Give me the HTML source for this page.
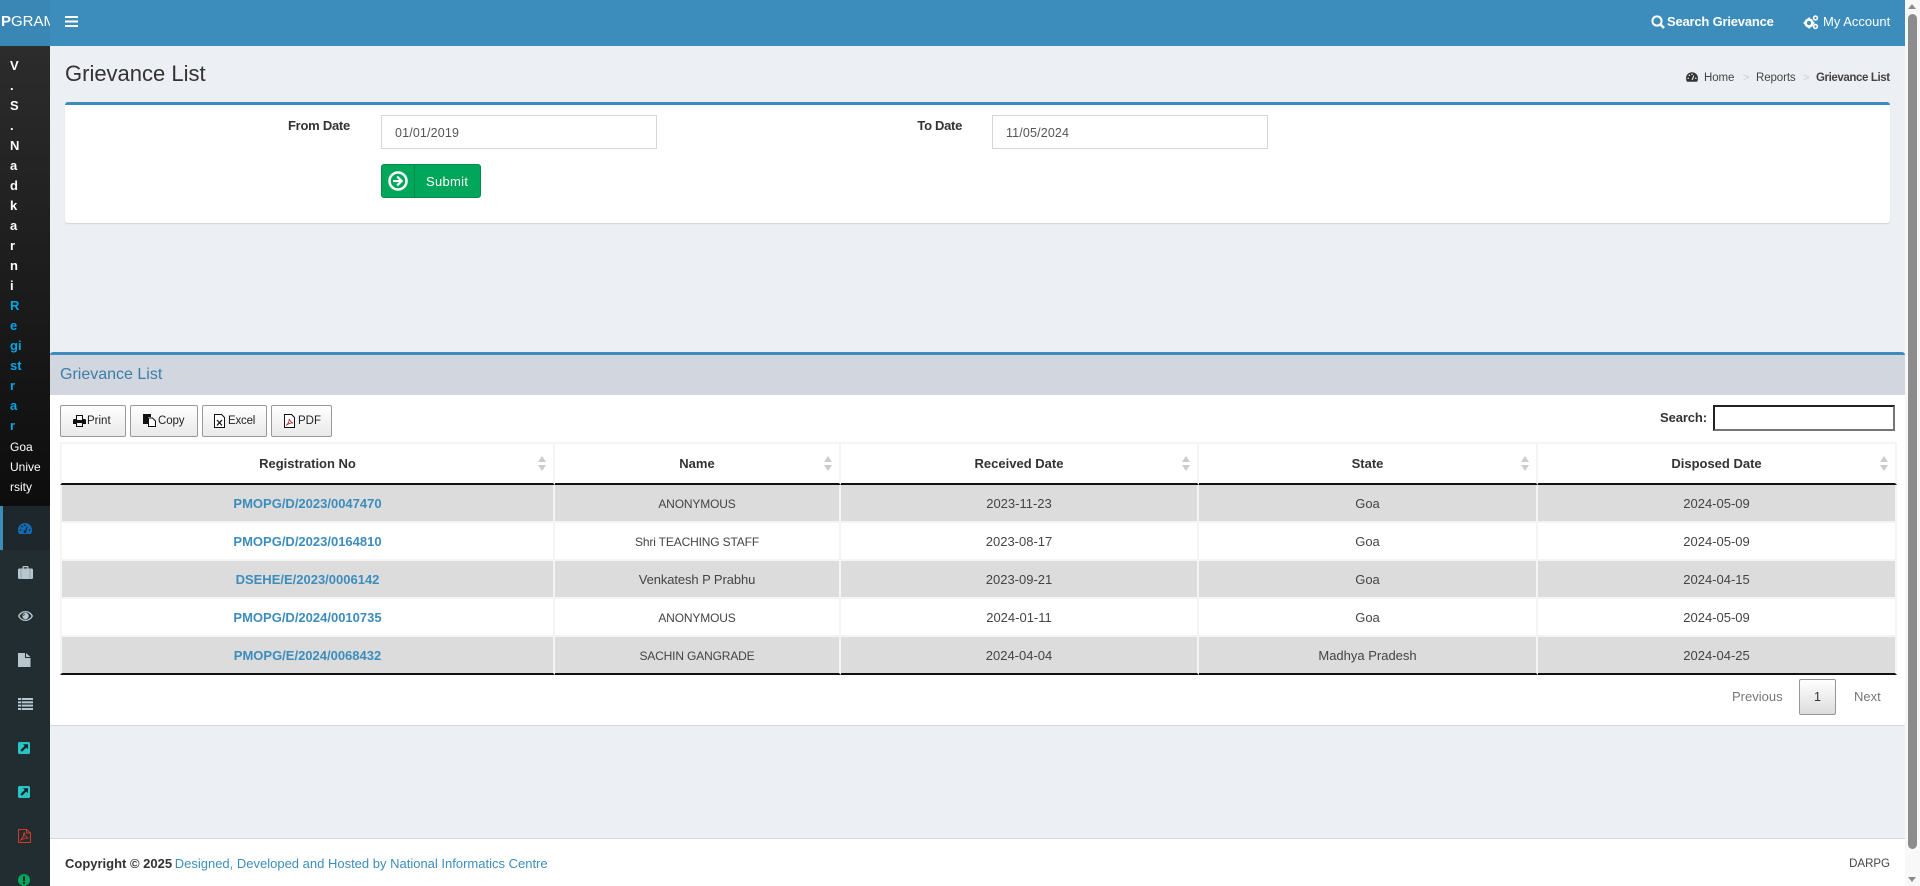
<!DOCTYPE html>
<html lang="en">
<head>
<meta charset="utf-8">
<title>Grievance List</title>
<style>
*{box-sizing:border-box}
html,body{margin:0;padding:0;width:1920px;height:886px;overflow:hidden;background:#ecf0f5;font-family:"Liberation Sans",sans-serif;font-size:13px;color:#333}
.a{position:absolute;white-space:nowrap;line-height:20px}
svg{position:absolute;display:block}
a{color:#3c8dbc;text-decoration:none}
header{position:absolute;left:0;top:0;width:1905px;height:46px;background:#3c8dbc}
.logo{position:absolute;left:0;top:0;width:50px;height:46px;background:#3a87b5;overflow:hidden;color:#fff;font-size:15px;line-height:44px;padding-left:1px;white-space:nowrap}
aside{position:absolute;left:0;top:46px;width:50px;height:840px;background:#222d32}
.user{position:absolute;left:0;top:0;width:50px;height:460px;background:linear-gradient(#2c2c2c,#0d0d0d);padding-top:10px}
.user div{height:20px;line-height:20px;padding-left:10px;font-size:13px;font-weight:bold;color:#fff}
.user .r{color:#00a7e8}
.user .g{font-weight:normal;font-size:12px;padding-top:1px}
.act{position:absolute;left:0;top:460px;width:50px;height:44px;background:#1e282c;border-left:3px solid #3c8dbc}
.box1{position:absolute;left:65px;top:102px;width:1825px;height:121px;background:#fff;border-top:3px solid #3c8dbc;border-radius:3px;box-shadow:0 1px 1px rgba(0,0,0,.12)}
.inp{position:absolute;height:34px;width:276px;top:115px;background:#fff;border:1px solid #d2d6de;padding-left:13px;line-height:34px;font-size:12.5px;letter-spacing:.15px;color:#555}
.sub{position:absolute;left:381px;top:164px;width:100px;height:34px;background:#00a65a;border-radius:3px;border:1px solid #008d4c}
.sub i{position:absolute;left:32px;top:0;height:32px;width:1px;background:#008d4c}
.sub span{position:absolute;left:44px;top:1px;line-height:32px;color:#fff;font-size:13px;letter-spacing:.3px}
.box2{position:absolute;left:50px;top:352px;width:1855px;height:374px;background:#fff;border-top:3px solid #3c8dbc;border-bottom:1px solid #d2d6de;border-radius:3px}
.bh{position:absolute;left:0;top:0;width:100%;height:40px;background:#d2d6de}
.btn{position:absolute;top:405px;height:32px;border:1px solid #999;border-radius:2px;background:linear-gradient(#fff,#e9e9e9);font-size:11.5px;line-height:31px;color:#222}
.btn span{position:absolute;top:0}
table{position:absolute;left:60px;top:442px;width:1837px;border-collapse:separate;border-spacing:0;table-layout:fixed;border-top:2px solid #f4f4f4}
th,td{text-align:center;padding:0;border-right:2px solid #f4f4f4;font-size:13px}
th:first-child,td:first-child{border-left:2px solid #f4f4f4}
th{height:41px;border-bottom:2px solid #111;font-weight:bold;position:relative;color:#333}
td{height:38px;border-bottom:2px solid #f4f4f4;color:#444}
tr.s td{background:#dcdcdc}
tr.l td{height:38px;border-bottom:2px solid #111}
td a{font-weight:bold}
.u{font-size:12px;letter-spacing:-.15px}
.sort{position:absolute;right:7px;top:12px;width:8px;height:15px}
.sort:before,.sort:after{content:"";position:absolute;left:0;border-left:4px solid transparent;border-right:4px solid transparent}
.sort:before{top:0;border-bottom:6px solid #ccc}
.sort:after{bottom:0;border-top:6px solid #ccc}
.search{position:absolute;left:1713px;top:405px;width:182px;height:26px;background:#fff;border:2px solid;border-color:#222 #767676 #767676 #222}
.pg{position:absolute;left:1799px;top:679px;width:37px;height:36px;border:1px solid #979797;border-radius:2px;background:linear-gradient(#fff,#dcdcdc);text-align:center;line-height:34px;font-size:12.5px;color:#333}
footer{position:absolute;left:50px;top:838px;width:1855px;height:48px;background:#fff;border-top:1px solid #d2d6de}
.track{position:absolute;left:1905px;top:0;width:15px;height:886px;background:#f8f8f8}
.thumb{position:absolute;left:3px;top:14px;width:9px;height:835px;background:#8c8c8c;border-radius:5px}
.ua{position:absolute;left:3px;top:4px;border-left:4.5px solid transparent;border-right:4.5px solid transparent;border-bottom:5px solid #8c8c8c}
.da{position:absolute;left:3px;bottom:4px;border-left:4.5px solid transparent;border-right:4.5px solid transparent;border-top:5px solid #8c8c8c}
</style>
</head>
<body>
<header>
  <div class="logo"><b>P</b>GRAM</div>
  <svg style="left:65px;top:16px" width="13" height="11" viewBox="0 0 13 11" fill="#fff"><rect width="13" height="2"/><rect y="4.5" width="13" height="2"/><rect y="9" width="13" height="2"/></svg>
  <svg style="left:1651px;top:15px" width="14" height="14" viewBox="0 0 14 14" fill="none" stroke="#fff" stroke-width="2"><circle cx="6" cy="6" r="4.6"/><path d="M9.5 9.5L13 13" stroke-width="2.4"/></svg>
  <div class="a" style="left:1667px;top:12px;color:#fff;font-weight:bold;font-size:13px;letter-spacing:-.2px">Search Grievance</div>
  <svg style="left:1803px;top:14px" width="16" height="16" viewBox="0 0 16 16" fill="#fff"><circle cx="6" cy="9" r="3.4" fill="none" stroke="#fff" stroke-width="2.6"/><circle cx="12.5" cy="4" r="1.9" fill="none" stroke="#fff" stroke-width="1.6"/><circle cx="12.5" cy="12.5" r="1.9" fill="none" stroke="#fff" stroke-width="1.6"/><path d="M5 3.6h2l.3 1.6h-2.6zM5 14.4h2l.3-1.6h-2.6zM.6 8h1.6v2H.6zM9.8 8h1.6v2H9.8z"/></svg>
  <div class="a" style="left:1823px;top:12px;color:#fff;font-size:13px">My Account</div>
</header>

<aside>
  <div class="user">
    <div>V</div><div>.</div><div>S</div><div>.</div><div>N</div><div>a</div><div>d</div><div>k</div><div>a</div><div>r</div><div>n</div><div>i</div>
    <div class="r">R</div><div class="r">e</div><div class="r">gi</div><div class="r">st</div><div class="r">r</div><div class="r">a</div><div class="r">r</div>
    <div class="g">Goa</div><div class="g">Unive</div><div class="g">rsity</div>
  </div>
  <div class="act"></div>
</aside>
<!-- gauge -->
<svg style="left:18px;top:523px" width="14" height="11" viewBox="0 0 14 11"><path fill="#0f6cb5" d="M7 0a7 7 0 0 1 7 7c0 1.500-.4 2.900-1.100 4H1.100A7.800 7.800 0 0 1 0 7a7 7 0 0 1 7-7z"/><g fill="#1e282c"><circle cx="2.500" cy="7" r=".9"/><circle cx="4" cy="3.500" r=".9"/><circle cx="7" cy="2.300" r=".9"/><circle cx="11.500" cy="7" r=".9"/><circle cx="7" cy="8.800" r="1.400"/><path d="M6.500 8.500L8.800 3.400l.9.3-1.700 5.300z"/></g></svg>
<!-- briefcase -->
<svg style="left:18px;top:566px" width="15" height="13" viewBox="0 0 15 13"><path fill="#b8c7ce" d="M4.500 2.500V1a1 1 0 0 1 1-1h4a1 1 0 0 1 1 1v1.500H13.500A1.500 1.500 0 0 1 15 4v7.500A1.500 1.500 0 0 1 13.500 13h-12A1.500 1.500 0 0 1 0 11.500V4a1.500 1.500 0 0 1 1.500-1.500zM5.700 1.200v1.300h3.600V1.200z" fill-rule="evenodd"/><path stroke="#8d9aa0" stroke-width=".8" d="M3 3v10M12 3v10"/></svg>
<!-- eye -->
<svg style="left:18px;top:611px" width="15" height="10" viewBox="0 0 15 10"><path fill="#b8c7ce" fill-rule="evenodd" d="M7.500 0C11 0 13.800 2.200 15 5c-1.200 2.800-4 5-7.500 5S1.200 7.800 0 5C1.200 2.200 4 0 7.500 0zm0 1.200C5 1.200 2.800 2.700 1.500 5c1.300 2.300 3.500 3.800 6 3.800s4.700-1.500 6-3.800c-1.300-2.300-3.500-3.800-6-3.800z"/><path fill="#b8c7ce" fill-rule="evenodd" d="M7.500 1.800a3.200 3.200 0 1 1 0 6.400 3.200 3.200 0 0 1 0-6.400zM6.900 3C5.800 3.200 5.200 4 5.100 5h.9c0-.6.400-1.100.9-1.200z"/></svg>
<!-- file -->
<svg style="left:18px;top:653px" width="13" height="14" viewBox="0 0 13 14"><path fill="#b8c7ce" d="M0 0h7v5h5.500v9H0zM8 0l4.500 4H8z"/></svg>
<!-- list -->
<svg style="left:18px;top:698px" width="15" height="12" viewBox="0 0 15 12" fill="#b8c7ce"><rect y="0" width="15" height="2"/><rect y="3.300" width="15" height="2"/><rect y="6.600" width="15" height="2"/><rect y="10" width="15" height="2"/><rect x="3" width=".7" height="12" fill="#222d32"/></svg>
<!-- external squares -->
<svg style="left:18px;top:742px" width="12" height="12" viewBox="0 0 12 12"><rect width="12" height="12" rx="1.500" fill="#2bc4c4"/><path fill="#14232a" d="M5 2.200h5v5L8.300 5.500 4 9.800 2.400 8.200 6.700 3.900z"/></svg>
<svg style="left:18px;top:786px" width="12" height="12" viewBox="0 0 12 12"><rect width="12" height="12" rx="1.500" fill="#2bc4c4"/><path fill="#14232a" d="M5 2.200h5v5L8.300 5.500 4 9.800 2.400 8.200 6.700 3.900z"/></svg>
<!-- pdf -->
<svg style="left:18px;top:829px" width="13" height="14" viewBox="0 0 13 14" fill="none" stroke="#d73925" stroke-width="1"><path d="M.5.500h8l4 3.500v9.500H.5zM8.500.500V4h4"/><path d="M2 11.500C4 10.500 6 6.500 5.800 4.500c-.2-1 .9-1 .8 0-.2 2 1.500 4 3.900 4.500-2-.2-5.500.7-8.500 2.500z" stroke-width=".9"/></svg>
<!-- exclamation -->
<svg style="left:18px;top:874px" width="12" height="12" viewBox="0 0 12 12"><circle cx="6" cy="6" r="6" fill="#00a65a"/><rect x="5" y="2.200" width="2" height="4.800" fill="#14232a"/><rect x="5" y="8" width="2" height="2" fill="#14232a"/></svg>

<div class="a" style="left:65px;top:60px;font-size:22px;line-height:28px;color:#333">Grievance List</div>
<svg style="left:1686px;top:72px" width="12" height="10" viewBox="0 0 14 11"><path fill="#333" d="M7 0a7 7 0 0 1 7 7c0 1.500-.4 2.900-1.100 4H1.100A7.800 7.800 0 0 1 0 7a7 7 0 0 1 7-7z"/><g fill="#ecf0f5"><circle cx="2.500" cy="7" r=".9"/><circle cx="4" cy="3.500" r=".9"/><circle cx="7" cy="2.300" r=".9"/><circle cx="11.500" cy="7" r=".9"/><path d="M6.500 8.500L8.800 3.400l.9.300-1.700 5.300z"/></g></svg>
<div class="a" style="left:1704px;top:68px;font-size:11.500px;color:#444;letter-spacing:-.1px">Home</div>
<div class="a" style="left:1743px;top:68px;font-size:11px;color:#ccc">&gt;</div>
<div class="a" style="left:1756px;top:68px;font-size:11.500px;color:#444;letter-spacing:-.1px">Reports</div>
<div class="a" style="left:1803px;top:68px;font-size:11px;color:#ccc">&gt;</div>
<div class="a" style="left:1816px;top:68px;font-size:11.500px;font-weight:bold;letter-spacing:-.4px;color:#444">Grievance List</div>

<div class="box1"></div>
<div class="a" style="right:1570px;top:116px;font-weight:bold;font-size:13px;letter-spacing:-.25px">From Date</div>
<div class="inp" style="left:381px">01/01/2019</div>
<div class="a" style="right:958px;top:116px;font-weight:bold;font-size:13px;letter-spacing:-.3px">To Date</div>
<div class="inp" style="left:992px">11/05/2024</div>
<div class="sub"><svg style="left:6px;top:6px" width="20" height="20" viewBox="0 0 20 20"><circle cx="10" cy="10" r="8.500" fill="none" stroke="#fff" stroke-width="2.500"/><path fill="#fff" d="M10 4.800l5.200 5.200-5.200 5.200-1.600-1.600 2.500-2.500H5V9h5.900L8.400 6.400z"/></svg><i></i><span>Submit</span></div>

<div class="box2"><div class="bh"></div></div>
<div class="a" style="left:60px;top:365px;font-size:16px;color:#3c7ea8">Grievance List</div>

<div class="btn" style="left:60px;width:66px"><svg style="left:12px;top:9px" width="13" height="12" viewBox="0 0 13 12" fill="#111"><path fill-rule="evenodd" d="M3 0h7v4h1.500A1.500 1.500 0 0 1 13 5.500V9h-3v3H3V9H0V5.500A1.500 1.500 0 0 1 1.500 4H3zm1 1v4h5V1zM4 8v3h5V8z"/></svg><span style="left:26px">Print</span></div>
<div class="btn" style="left:130px;width:68px"><svg style="left:12px;top:8px" width="13" height="13" viewBox="0 0 13 13"><path fill="#111" d="M0 0h8v3H5v7H0z"/><path fill="#fff" stroke="#111" d="M5.500 4h4l3 3v5.500h-7z"/></svg><span style="left:27px;letter-spacing:-.1px">Copy</span></div>
<div class="btn" style="left:202px;width:65px"><svg style="left:11px;top:8px" width="11" height="14" viewBox="0 0 11 14"><path fill="#fff" stroke="#111" d="M.5.500h7l3 3v10H.5z"/><path stroke="#111" stroke-width="1.300" d="M3 6l5 5.500M8 6l-5 5.500"/></svg><span style="left:25px;letter-spacing:-.2px">Excel</span></div>
<div class="btn" style="left:271px;width:61px"><svg style="left:12px;top:8px" width="11" height="14" viewBox="0 0 11 14"><path fill="#fff" stroke="#111" d="M.5.500h7l3 3v10H.5z"/><path fill="none" stroke="#a33" stroke-width=".9" d="M2 11.500c2-1 3.500-4.500 3.200-6.500 1 2.500 2 3.500 4 4-2-.2-4.500.5-7.200 2.500z"/></svg><span style="left:26px">PDF</span></div>

<div class="a" style="left:1660px;top:408px;font-weight:bold;font-size:13px;letter-spacing:-.1px">Search:</div>
<div class="search"></div>

<table>
<colgroup><col style="width:495px"><col style="width:286px"><col style="width:358px"><col style="width:339px"><col style="width:359px"></colgroup>
<thead><tr><th>Registration No<span class="sort"></span></th><th>Name<span class="sort"></span></th><th>Received Date<span class="sort"></span></th><th>State<span class="sort"></span></th><th>Disposed Date<span class="sort"></span></th></tr></thead>
<tbody>
<tr class="s"><td><a href="#">PMOPG/D/2023/0047470</a></td><td><span class="u">ANONYMOUS</span></td><td>2023-11-23</td><td>Goa</td><td>2024-05-09</td></tr>
<tr><td><a href="#">PMOPG/D/2023/0164810</a></td><td><span class="u">Shri TEACHING STAFF</span></td><td>2023-08-17</td><td>Goa</td><td>2024-05-09</td></tr>
<tr class="s"><td><a href="#">DSEHE/E/2023/0006142</a></td><td style="letter-spacing:-.1px">Venkatesh P Prabhu</td><td>2023-09-21</td><td>Goa</td><td>2024-04-15</td></tr>
<tr><td><a href="#">PMOPG/D/2024/0010735</a></td><td><span class="u">ANONYMOUS</span></td><td>2024-01-11</td><td>Goa</td><td>2024-05-09</td></tr>
<tr class="s l"><td><a href="#">PMOPG/E/2024/0068432</a></td><td><span class="u">SACHIN GANGRADE</span></td><td>2024-04-04</td><td>Madhya Pradesh</td><td>2024-04-25</td></tr>
</tbody>
</table>

<div class="a" style="left:1732px;top:687px;color:#777;font-size:13px">Previous</div>
<div class="pg">1</div>
<div class="a" style="left:1854px;top:687px;color:#777;font-size:13px">Next</div>

<footer>
  <div class="a" style="left:15px;top:15px;font-size:13px"><b>Copyright © 2025</b> <a href="#" style="margin-left:-1px">Designed, Developed and Hosted by National Informatics Centre</a></div>
  <div class="a" style="right:15px;top:15px;font-size:11.500px;color:#444">DARPG</div>
</footer>

<div class="track"><div class="ua"></div><div class="thumb"></div><div class="da"></div></div>
</body>
</html>
